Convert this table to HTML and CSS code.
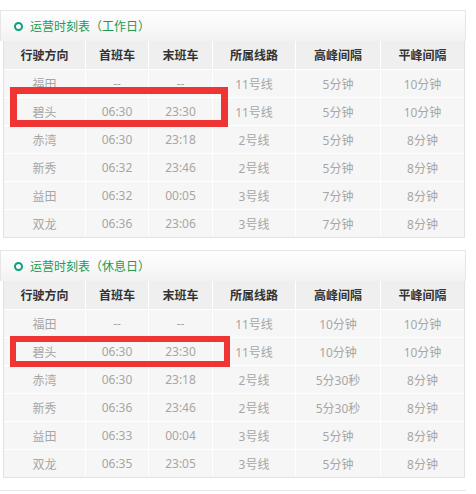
FILE: index.html
```html
<!DOCTYPE html>
<html lang="zh-CN">
<head>
    <meta charset="UTF-8">
    <title>运营时刻表</title>
    <link rel="stylesheet" href="styles.css">
</head>
<body>

<div class="panel">
    <div class="panel-title"><span class="dot"></span>运营时刻表（工作日）</div>
    <div class="grid">
        <table>
            <colgroup>
                <col class="c1"><col class="c2"><col class="c3"><col class="c4"><col class="c5"><col class="c6">
            </colgroup>
            <tr><th>行驶方向</th><th>首班车</th><th>末班车</th><th>所属线路</th><th>高峰间隔</th><th>平峰间隔</th></tr>
            <tr><td>福田</td><td>--</td><td>--</td><td>11号线</td><td>5分钟</td><td>10分钟</td></tr>
            <tr><td>碧头</td><td>06:30</td><td>23:30</td><td>11号线</td><td>5分钟</td><td>10分钟</td></tr>
            <tr><td>赤湾</td><td>06:30</td><td>23:18</td><td>2号线</td><td>5分钟</td><td>8分钟</td></tr>
            <tr><td>新秀</td><td>06:32</td><td>23:46</td><td>2号线</td><td>5分钟</td><td>8分钟</td></tr>
            <tr><td>益田</td><td>06:32</td><td>00:05</td><td>3号线</td><td>7分钟</td><td>8分钟</td></tr>
            <tr><td>双龙</td><td>06:36</td><td>23:06</td><td>3号线</td><td>7分钟</td><td>8分钟</td></tr>
        </table>
    </div>
    <div class="mark mark-work"></div>
</div>

<div class="panel">
    <div class="panel-title"><span class="dot"></span>运营时刻表（休息日）</div>
    <div class="grid">
        <table>
            <colgroup>
                <col class="c1"><col class="c2"><col class="c3"><col class="c4"><col class="c5"><col class="c6">
            </colgroup>
            <tr><th>行驶方向</th><th>首班车</th><th>末班车</th><th>所属线路</th><th>高峰间隔</th><th>平峰间隔</th></tr>
            <tr><td>福田</td><td>--</td><td>--</td><td>11号线</td><td>10分钟</td><td>10分钟</td></tr>
            <tr><td>碧头</td><td>06:30</td><td>23:30</td><td>11号线</td><td>10分钟</td><td>10分钟</td></tr>
            <tr><td>赤湾</td><td>06:30</td><td>23:18</td><td>2号线</td><td>5分30秒</td><td>8分钟</td></tr>
            <tr><td>新秀</td><td>06:36</td><td>23:46</td><td>2号线</td><td>5分30秒</td><td>8分钟</td></tr>
            <tr><td>益田</td><td>06:33</td><td>00:04</td><td>3号线</td><td>5分钟</td><td>8分钟</td></tr>
            <tr><td>双龙</td><td>06:35</td><td>23:05</td><td>3号线</td><td>5分钟</td><td>8分钟</td></tr>
        </table>
    </div>
    <div class="mark mark-rest"></div>
</div>

<div class="panel panel-next"></div>

</body>
</html>
```

FILE: styles.css
```css
body {
    margin: 0;
    background: #ffffff;
    font-family: "Noto Sans", "Noto Sans CJK SC", sans-serif;
    font-size: 12px;
}

.panel {
    position: relative;
    width: 466px;
    margin-top: 10px;
}

.panel + .panel {
    margin-top: 12px;
}

.panel-title {
    box-sizing: border-box;
    height: 31px;
    display: flex;
    align-items: center;
    gap: 7px;
    padding-left: 13px;
    border: 1px solid #e6e6e6;
    border-bottom: none;
    background: linear-gradient(#ffffff, #f2f2f2);
    color: #1c9a52;
    font-size: 12px;
}

.dot {
    width: 5px;
    height: 5px;
    border: 2px solid #0f9f7f;
    border-radius: 50%;
}

.grid {
    margin-left: 3px;
    width: 460px;
    border: 1px solid #e2e2e2;
    border-top: none;
}

table {
    width: 100%;
    table-layout: fixed;
    border-collapse: separate;
    border-spacing: 0;
}

.c1 { width: 82px; }
.c2 { width: 63px; }
.c3 { width: 64px; }
.c4 { width: 83px; }
.c5 { width: 85px; }
.c6 { width: 83px; }

th, td {
    box-sizing: border-box;
    padding: 0;
    text-align: center;
    border-right: 1px solid #ffffff;
    border-bottom: 1px solid #ffffff;
}

th:last-child, td:last-child {
    border-right: none;
}

tr:last-child td {
    border-bottom: none;
    height: 27px;
}

th {
    height: 29px;
    background: #efefef;
    color: #333333;
    font-weight: bold;
}

td {
    height: 28px;
    background: #f6f6f6;
    color: #a6a6a6;
}

.panel-next {
    height: 4px;
    border-top: 1px solid #e6e6e6;
}

.mark {
    position: absolute;
    left: 10px;
    box-sizing: border-box;
    border: 7px solid #ef3434;
}

.mark-work {
    top: 77px;
    width: 218px;
    height: 40px;
}

.mark-rest {
    top: 86px;
    width: 220px;
    height: 31px;
    border-width: 6px;
}
```
